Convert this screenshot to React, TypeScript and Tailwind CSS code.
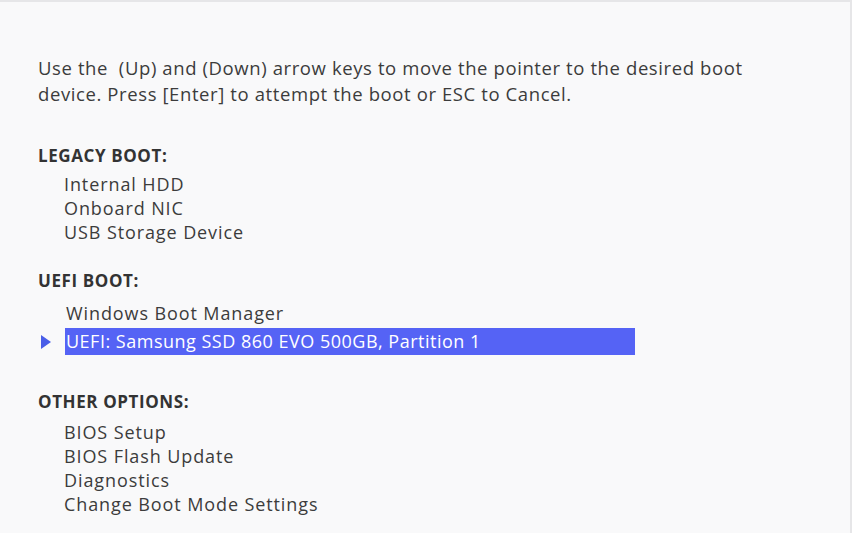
import React from 'react'

const legacy = ['Internal HDD', 'Onboard NIC', 'USB Storage Device']
const other = ['BIOS Setup', 'BIOS Flash Update', 'Diagnostics', 'Change Boot Mode Settings']

function Heading({ children }: { children: React.ReactNode }) {
  return <div className="font-bold text-[17px] leading-[24px] tracking-[0.6px] text-[#333]">{children}</div>
}

function Item({ children }: { children: React.ReactNode }) {
  return <div className="pl-[26px] text-[18px] leading-[24px] tracking-[0.9px]">{children}</div>
}

export default function App() {
  return (
    <div
      className="w-[852px] h-[533px] bg-[#f9f9fa] border-t-2 border-r-2 border-[#e6e6e8] text-[#3c3c3c] overflow-hidden"
      style={{ fontFamily: '"Open Sans", "Liberation Sans", sans-serif' }}
    >
      <div className="pl-[38px] pt-[53px]">
        <p className="text-[18.5px] leading-[26px] tracking-[0.6px] whitespace-nowrap">
          Use the&nbsp; (Up) and (Down) arrow keys to move the pointer to the desired boot
          <br />
          device. Press [Enter] to attempt the boot or ESC to Cancel.
        </p>

        <div className="mt-[37px]">
          <Heading>LEGACY BOOT:</Heading>
          <div className="mt-[4px]">
            {legacy.map(l => <Item key={l}>{l}</Item>)}
          </div>
        </div>

        <div className="mt-[25px]">
          <Heading>UEFI BOOT:</Heading>
          <div className="mt-[8px]">
            <div className="pl-[28px] text-[18px] leading-[24px] tracking-[0.9px]">Windows Boot Manager</div>
            <div className="flex items-center mt-[3px]">
              <svg width="12" height="16" viewBox="0 0 12 16" className="ml-[2px] mr-[13px]">
                <path d="M1 1 L11 8 L1 15 Z" fill="#4a5ee8" />
              </svg>
              <div className="w-[570px] h-[27px] bg-[#5563f5] text-white text-[18px] leading-[27px] tracking-[0.5px] pl-[1px]">
                UEFI: Samsung SSD 860 EVO 500GB, Partition 1
              </div>
            </div>
          </div>
        </div>

        <div className="mt-[35px]">
          <Heading>OTHER OPTIONS:</Heading>
          <div className="mt-[6px]">
            {other.map(l => <Item key={l}>{l}</Item>)}
          </div>
        </div>
      </div>
    </div>
  )
}
